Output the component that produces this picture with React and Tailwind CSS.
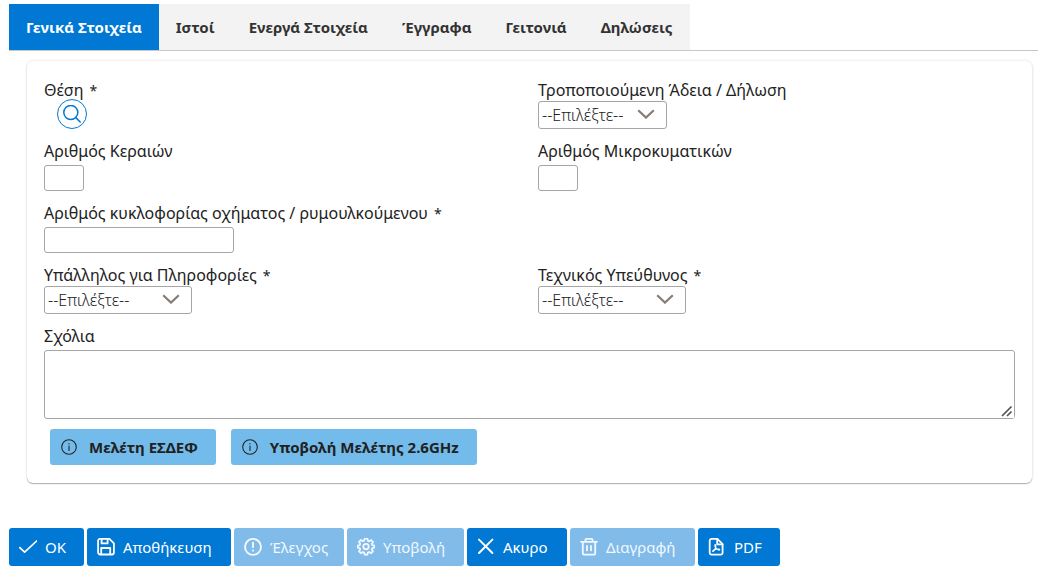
import React from "react";

const TABS = ["Γενικά Στοιχεία", "Ιστοί", "Ενεργά Στοιχεία", "Έγγραφα", "Γειτονιά", "Δηλώσεις"];

function Icon({ size = 18, width = 1.7, className = "", children }) {
  return (
    <svg
      aria-hidden="true"
      width={size}
      height={size}
      viewBox="0 0 18 18"
      fill="none"
      stroke="currentColor"
      strokeWidth={width}
      strokeLinecap="round"
      strokeLinejoin="round"
      className={"shrink-0 " + className}
    >
      {children}
    </svg>
  );
}

const CheckIcon = () => (
  <Icon><path d="M0.8 9.600 5.600 14.200 17.600 3" /></Icon>
);
const SaveIcon = () => (
  <Icon width={1.800}>
    <path d="M2.400 0.900h9.400L16.200 5.300v9.200a2 2 0 0 1-2 2H2.400a2 2 0 0 1-2-2V2.900a2 2 0 0 1 2-2Z" transform="translate(.7)" />
    <path d="M4.600 1.200v4.200h6V1.200M4.200 16.200v-6.200h9v6.200" />
  </Icon>
);
const AlertIcon = () => (
  <Icon width={1.900}>
    <circle cx="9" cy="8.900" r="8" />
    <path d="M9 4.800v4.400M9 12.500v.3" />
  </Icon>
);
const GearIcon = () => (
  <Icon width={1.800}>
    <circle cx="9" cy="8.600" r="2.700" />
    <path transform="translate(0 -.4)" d="M7.600 1h2.800l.5 2.200 1.300.5 1.900-1.200 1.900 1.900-1.200 1.900.5 1.300 2.200.5v1.900l-2.200.5-.5 1.300 1.200 1.900-1.900 1.900-1.900-1.200-1.300.5-.5 2.200H7.600l-.5-2.200-1.300-.5-1.900 1.200L2 13.700l1.200-1.900-.5-1.300L.8 10V8l1.900-.5.5-1.300L2 4.300l1.900-1.900 1.900 1.200 1.300-.5Z" />
  </Icon>
);
const CloseIcon = () => (
  <Icon width={2}><path d="M2 1.600 15.400 15M15.400 1.600 2 15" /></Icon>
);
const TrashIcon = () => (
  <Icon width={1.800}>
    <path d="M1 3.800h16M2.800 3.800v11.100a1.700 1.700 0 0 0 1.700 1.700h9a1.700 1.700 0 0 0 1.700-1.700V3.800M5.400 3.800V2.100A1.200 1.200 0 0 1 6.600.9h4.800a1.200 1.200 0 0 1 1.200 1.200V3.800M7 8v4.400M11 8v4.400" />
  </Icon>
);
const PdfIcon = () => (
  <Icon width={1.800}>
    <path d="M3.600.9h5.800l5.200 5.200v8.700a1.900 1.900 0 0 1-1.900 1.900H3.600a1.900 1.900 0 0 1-1.900-1.900V2.800A1.900 1.900 0 0 1 3.600.9Z" />
    <path d="M9.200 1.100v5.200h5.200" />
    <path d="M7.200 6.700c.8 0 .6 2.300.1 3.500-.6 1.500-1.600 3.400-2.300 3.300-1-.2.600-1.900 3.400-2.400 1.600-.3 3.500 0 3.200.7-.4.800-2.400-.4-3.700-1.900-1-1.200-1.300-3.200-.7-3.200Z" strokeWidth="1.200" />
  </Icon>
);
const InfoIcon = () => (
  <Icon size={16} width={1.200}>
    <circle cx="9" cy="9" r="8.200" />
    <path d="M9 8v4.800M9 5.200v.3" />
  </Icon>
);

const ACTIONS = [
  { label: "OK", icon: CheckIcon, width: "w-[75px]" },
  { label: "Αποθήκευση", icon: SaveIcon, width: "w-[144px]" },
  { label: "Έλεγχος", icon: AlertIcon, width: "w-[110px]", disabled: true },
  { label: "Υποβολή", icon: GearIcon, width: "w-[117px]", disabled: true },
  { label: "Ακυρο", icon: CloseIcon, width: "w-[100px]" },
  { label: "Διαγραφή", icon: TrashIcon, width: "w-[125px]", disabled: true },
  { label: "PDF", icon: PdfIcon, width: "w-[82px]" },
];

const LABEL = "block text-[16px] leading-[22px] whitespace-nowrap text-[#222]";

function Label({ htmlFor, required, children }) {
  return (
    <label htmlFor={htmlFor} className={LABEL}>
      {children}
      {required && <span className="ml-[6px] text-[14px] leading-none">*</span>}
    </label>
  );
}

function SelectField({ id, label, required, width }) {
  return (
    <div>
      <Label htmlFor={id} required={required}>{label}</Label>
      <div className={"relative " + width}>
        <select
          id={id}
          className="block h-7 w-full appearance-none rounded-[3px] border border-[#a6a6a6] bg-white pl-[3px] text-[16px] font-light text-[#222]"
        >
          <option>--Επιλέξτε--</option>
        </select>
        <svg
          aria-hidden="true"
          viewBox="0 0 18 10"
          className="pointer-events-none absolute top-2 right-3 h-[10px] w-[18px]"
          fill="none"
          stroke="#857d78"
          strokeWidth="2.200"
        >
          <path d="M1.200 1.200 9 8.600 16.800 1.200" />
        </svg>
      </div>
    </div>
  );
}

function InputField({ id, label, required, width }) {
  return (
    <div>
      <Label htmlFor={id} required={required}>{label}</Label>
      <input
        id={id}
        type="text"
        className={"mt-[3px] block h-[26px] rounded-[3px] border border-[#a6a6a6] bg-white px-1 text-[15px] " + width}
      />
    </div>
  );
}

function InfoButton({ children }) {
  return (
    <button type="button" className="flex h-9 items-center gap-3 rounded-[3px] bg-[#73bbea] pr-[18px] pl-[11px] text-[15px] font-bold whitespace-nowrap text-[#212121]">
      <InfoIcon />
      {children}
    </button>
  );
}

export default function App() {
  return (
    <div className="bg-white pt-1 pl-[9px] font-['Noto_Sans','Open_Sans',sans-serif] text-[#222]">
      <nav role="tablist" className="flex border-b border-[#c8c8c8]">
        {TABS.map((tab, i) => (
          <button
            key={tab}
            type="button"
            role="tab"
            aria-selected={i === 0}
            className={
              "h-[46px] px-[17px] text-[15px] font-bold whitespace-nowrap " +
              (i === 0 ? "bg-[#0078d4] text-white" : "bg-[#f3f3f3] text-[#333]")
            }
          >
            {tab}
          </button>
        ))}
      </nav>

      <main className="mt-[10px] mr-[6px] ml-[18px] rounded-[6px] px-[17px] pt-[18px] pb-[18px] shadow-[0_1px_1px_rgba(0,0,0,0.28),0_0_3px_rgba(0,0,0,0.14)]">
        <div className="grid grid-cols-[494px_1fr] gap-y-[11px]">
          <div>
            <span id="site-label" className={LABEL}>
              Θέση<span className="ml-[6px] text-[14px] leading-none">*</span>
            </span>
            <button
              type="button"
              aria-labelledby="site-label"
              className="-mt-[2px] -mb-[1px] ml-[13px] flex h-[30px] w-[30px] items-center justify-center rounded-full border border-[#0078d4] text-[#0078d4]"
            >
              <Icon width={1.500}>
                <circle cx="7.800" cy="7.500" r="7" />
                <path d="M12.800 12.600 17.200 17" />
              </Icon>
            </button>
          </div>
          <SelectField id="permit" label="Τροποποιούμενη Άδεια / Δήλωση" width="w-[129px]" />
          <InputField id="antennas" label="Αριθμός Κεραιών" width="w-10" />
          <InputField id="microwaves" label="Αριθμός Μικροκυματικών" width="w-10" />
          <div className="col-span-2">
            <InputField id="plate" label="Αριθμός κυκλοφορίας οχήματος / ρυμουλκούμενου" required width="w-[190px]" />
          </div>
          <SelectField id="contact" label="Υπάλληλος για Πληροφορίες" required width="w-[148px]" />
          <SelectField id="engineer" label="Τεχνικός Υπεύθυνος" required width="w-[148px]" />
          <div className="col-span-2">
            <Label htmlFor="comments">Σχόλια</Label>
            <div className="relative mt-[3px]">
              <textarea
                id="comments"
                className="block h-[69px] w-full resize-y rounded-[3px] border border-[#a6a6a6] bg-white px-1 text-[15px]"
              />
              <svg
                aria-hidden="true"
                viewBox="0 0 14 14"
                className="pointer-events-none absolute right-px bottom-px h-[14px] w-[14px] bg-white"
                stroke="#555"
                strokeWidth="1.700"
              >
                <path d="M2 12 11.500 2.500M7 12 11.500 7.500" />
              </svg>
            </div>
          </div>
        </div>
        <div className="mt-[10px] ml-[6px] flex gap-[15px]">
          <InfoButton>Μελέτη ΕΣΔΕΦ</InfoButton>
          <InfoButton>Υποβολή Μελέτης 2.6GHz</InfoButton>
        </div>
      </main>

      <footer className="mt-[45px] flex gap-[3px]">
        {ACTIONS.map(({ label, icon: Glyph, width, disabled }) => (
          <button
            key={label}
            type="button"
            disabled={disabled}
            className={
              "flex h-[38px] items-center gap-2 rounded-[3px] pl-[10px] text-[15px] whitespace-nowrap " +
              (disabled ? "bg-[#80bbea] text-[#f2f8fd] " : "bg-[#0078d4] text-white ") +
              width
            }
          >
            <Glyph />
            {label}
          </button>
        ))}
      </footer>
    </div>
  );
}
